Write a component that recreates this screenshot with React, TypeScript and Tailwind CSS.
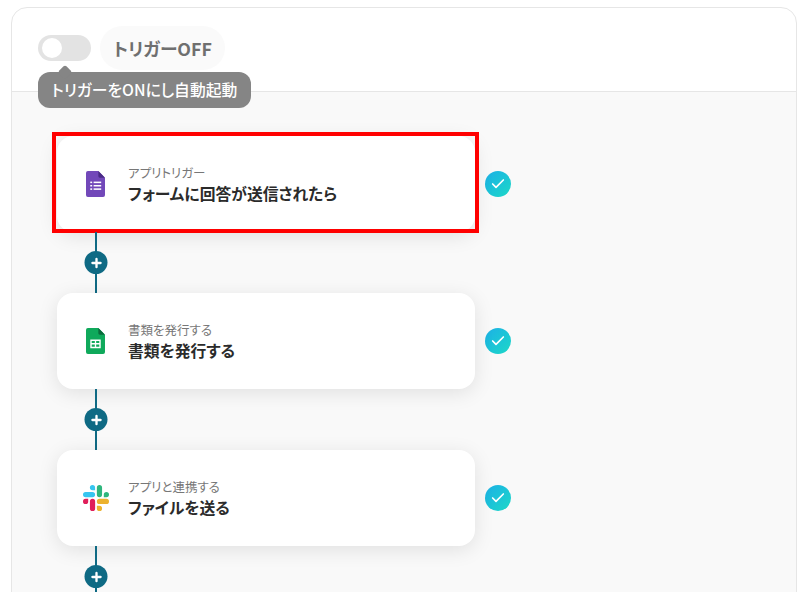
import { Check, Plus } from "lucide-react";
import type { ReactNode } from "react";

function FormsIcon() {
  return (
    <svg width="19" height="26" viewBox="0 0 20 27" preserveAspectRatio="none">
      <path d="M2 0h11l7 7v18a2 2 0 0 1-2 2H2a2 2 0 0 1-2-2V2a2 2 0 0 1 2-2z" fill="#7248b9" />
      <path d="M13 0l7 7h-5.500a1.500 1.500 0 0 1-1.500-1.500z" fill="#4a2a86" />
      <g fill="#fff">
        <rect x="4.500" y="11" width="2" height="1.600" />
        <rect x="8" y="11" width="8" height="1.600" />
        <rect x="4.500" y="14.500" width="2" height="1.600" />
        <rect x="8" y="14.500" width="8" height="1.600" />
        <rect x="4.500" y="18" width="2" height="1.600" />
        <rect x="8" y="18" width="8" height="1.600" />
      </g>
    </svg>
  );
}

function SheetsIcon() {
  return (
    <svg width="19" height="26" viewBox="0 0 20 27" preserveAspectRatio="none">
      <path d="M2 0h11l7 7v18a2 2 0 0 1-2 2H2a2 2 0 0 1-2-2V2a2 2 0 0 1 2-2z" fill="#0fa95b" />
      <path d="M13 0l7 7h-5.500a1.500 1.500 0 0 1-1.500-1.500z" fill="#0a6b3c" />
      <path d="M4.500 12h11v9h-11zM6 13.500v2.200h3.300v-2.200zm4.700 0v2.200H14v-2.200zM6 17.100v2.400h3.300v-2.400zm4.700 0v2.400H14v-2.400z" fill="#fff" fillRule="evenodd" />
    </svg>
  );
}

function SlackIcon() {
  return (
    <svg width="26" height="26" viewBox="0 0 54 54">
      <g fill="none" fillRule="evenodd">
        <path d="M19.700 0a5.400 5.400 0 1 0 0 10.800h5.400V5.400A5.400 5.400 0 0 0 19.700 0zm0 14.400H5.400a5.400 5.400 0 1 0 0 10.800h14.300a5.400 5.400 0 1 0 0-10.800z" fill="#36c5f0" />
        <path d="M54 19.800a5.400 5.400 0 1 0-10.800 0v5.400h5.400a5.400 5.400 0 0 0 5.400-5.400zm-14.400 0V5.400a5.400 5.400 0 1 0-10.800 0v14.400a5.400 5.400 0 1 0 10.800 0z" fill="#2eb67d" />
        <path d="M34.200 54a5.400 5.400 0 1 0 0-10.800h-5.400v5.400a5.400 5.400 0 0 0 5.400 5.400zm0-14.400h14.400a5.400 5.400 0 1 0 0-10.800H34.200a5.400 5.400 0 1 0 0 10.800z" fill="#ecb22e" />
        <path d="M0 34.200a5.400 5.400 0 1 0 10.800 0v-5.400H5.400A5.400 5.400 0 0 0 0 34.200zm14.400 0v14.400a5.400 5.400 0 1 0 10.800 0V34.200a5.400 5.400 0 1 0-10.800 0z" fill="#e01e5a" />
      </g>
    </svg>
  );
}

interface Step {
  icon: ReactNode;
  label: string;
  title: string;
  selected?: boolean;
}

const STEPS: Step[] = [
  { icon: <FormsIcon />, label: "アプリトリガー", title: "フォームに回答が送信されたら", selected: true },
  { icon: <SheetsIcon />, label: "書類を発行する", title: "書類を発行する" },
  { icon: <SlackIcon />, label: "アプリと連携する", title: "ファイルを送る" },
];

function Connector() {
  return (
    <div className="flex h-[61px] w-[418px] flex-col items-start">
      <div className="relative ml-[38px] h-full w-[2px] bg-[#0f6a84]">
        <div className="absolute left-1/2 top-[19px] flex h-[23px] w-[23px] -translate-x-1/2 items-center justify-center rounded-full bg-[#0f6a84]">
          <Plus size={14} strokeWidth={4} className="text-white" />
        </div>
      </div>
    </div>
  );
}

export default function App() {
  return (
    <div className="h-[592px] w-[808px] overflow-hidden bg-white pl-[11px] pr-[11px] pt-[7px] font-['Noto_Sans_CJK_JP','Noto_Sans',sans-serif] [font-feature-settings:'palt']">
      <div className="h-[620px] rounded-t-[16px] border border-[#e6e6e6] bg-white">
        <div className="relative flex h-[84px] items-start gap-[9px] border-b border-[#e6e6e6] pl-[26px] pt-[18px]">
          <div className="mt-[9px] flex h-[26px] w-[53px] items-center rounded-full bg-[#e3e3e3] pl-[4px]">
            <div className="h-[20px] w-[20px] rounded-full bg-white" />
          </div>
          <div className="flex h-[44px] w-[125px] items-center justify-center rounded-full bg-[#fafafa] text-[17.8px] font-bold text-[#6f6f6f]">
            トリガーOFF
          </div>
          <div className="absolute left-[26px] top-[64px] z-10 flex h-[36px] w-[213px] items-center justify-center rounded-[12px] bg-[#858585] text-[15.8px] font-medium text-white">
            <span className="absolute left-[22px] top-[-5px] h-[10px] w-[10px] rotate-45 rounded-[2px] bg-[#858585]" />
            <span className="relative">トリガーをONにし自動起動</span>
          </div>
        </div>
        <div className="flex h-full flex-col bg-[#f9f9f9] pl-[45px] pt-[44px]">
          {STEPS.map((step, i) => (
            <div key={step.label}>
              {i > 0 && <Connector />}
              <div className="flex items-center gap-[10px]">
                <div className="relative flex h-[96px] w-[418px] items-center rounded-[16px] bg-white shadow-[0_4px_20px_rgba(0,0,0,0.1)]">
                  {step.selected && (
                    <span className="absolute -bottom-[1px] -left-[5px] -right-[4px] -top-[4px] border-[4px] border-[#ff0000]" />
                  )}
                  <div className="flex w-[71px] justify-center pl-[6px]">{step.icon}</div>
                  <div className="pt-[2px]">
                    <p className="text-[12.5px] leading-[16px] text-[#777777]">{step.label}</p>
                    <p className="mt-[2px] text-[15.8px] font-bold leading-[22px] text-[#2b2b2b]">{step.title}</p>
                  </div>
                </div>
                <div className="flex h-[26px] w-[26px] items-center justify-center rounded-full bg-gradient-to-br from-[#1fb0e6] to-[#1fd8c6]">
                  <Check size={16} strokeWidth={2.5} className="text-white" />
                </div>
              </div>
            </div>
          ))}
          <Connector />
        </div>
      </div>
    </div>
  );
}
